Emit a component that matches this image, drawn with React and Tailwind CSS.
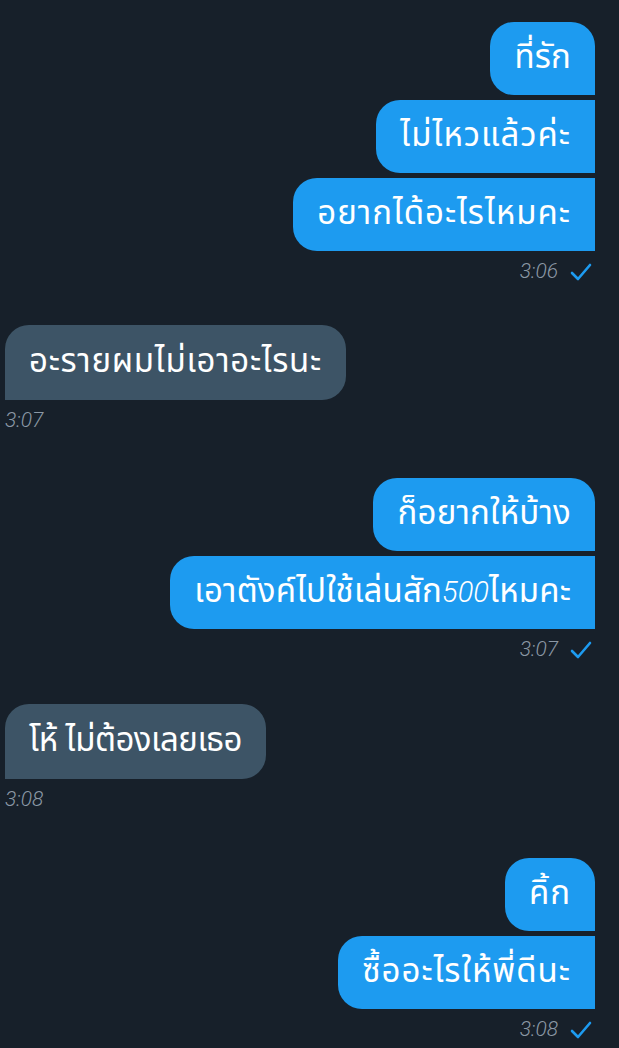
import React from 'react';

const groups = [
  { side: 'right', msgs: ['ที่รัก', 'ไม่ไหวแล้วค่ะ', 'อยากได้อะไรไหมคะ'], time: '3:06', mt: 'mt-0' },
  { side: 'left', msgs: ['อะรายผมไม่เอาอะไรนะ'], time: '3:07', mt: 'mt-[41px]', track: 'tracking-[0.7px]' },
  { side: 'right', msgs: ['ก็อยากให้บ้าง', 'เอาตังค์ไปใช้เล่นสัก|500|ไหมคะ'], time: '3:07', mt: 'mt-[45px]', track: 'tracking-[0.2px]' },
  { side: 'left', msgs: ['โห้ ไม่ต้องเลยเธอ'], time: '3:08', mt: 'mt-[42px]', track: 'tracking-[-0.5px]' },
  { side: 'right', msgs: ['คิ้ก', 'ซื้ออะไรให้พี่ดีนะ'], time: '3:08', mt: 'mt-[46px]', first: 'tracking-[1px]' },
];

function Check() {
  return (
    <svg width="22" height="20" viewBox="0 0 22 20" fill="none">
      <path d="M2 11 L8 17 L20 3" stroke="#1d9bf0" strokeWidth="2.6" strokeLinecap="round" strokeLinejoin="round" />
    </svg>
  );
}

function bubbleShape(side, i) {
  if (side === 'left') return 'rounded-[24px] rounded-bl-none';
  if (i === 0) return 'rounded-[24px] rounded-br-none';
  return 'rounded-l-[24px]';
}

// "|" marks a run of digits that the app renders in its thin latin face
function Text({ value }) {
  const parts = value.split('|');
  return parts.map((p, i) =>
    i % 2 === 1 ? (
      <span key={i} className="font-light italic text-[29px] tracking-normal" style={{ fontFamily: 'Roboto, sans-serif' }}>{p}</span>
    ) : (
      <span key={i}>{p}</span>
    )
  );
}

function Group({ side, msgs, time, mt, track = 'tracking-[1px]', first = 'tracking-[0.2px]' }) {
  const right = side === 'right';
  return (
    <div className={`flex flex-col ${right ? 'items-end' : 'items-start'} ${mt}`}>
      <div className={`flex flex-col gap-[5px] ${right ? 'items-end' : 'items-start'}`}>
        {msgs.map((m, i) => (
          <div
            key={i}
            className={`${right ? 'h-[73px] bg-[#1d9bf0]' : 'h-[75px] bg-[#3d5466]'} flex items-center px-[24px] text-[33px] ${i === 0 && right ? first : track} text-white ${bubbleShape(side, i)}`}
          >
            <Text value={m} />
          </div>
        ))}
      </div>
      <div className="mt-[9px] flex items-center gap-[12px] h-[24px] text-[21px] font-light italic text-[#8b98a5] pr-[3px]" style={{ fontFamily: 'Roboto, sans-serif' }}>
        <span>{time}</span>
        {right && <Check />}
      </div>
    </div>
  );
}

export default function App() {
  return (
    <div className="min-h-[1048px] w-[619px] bg-[#17202a] pt-[22px] pl-[5px] pr-[24px]" style={{ fontFamily: '"Noto Sans Thai", "Noto Sans", "DejaVu Sans", sans-serif' }}>
      {groups.map((g, i) => (
        <Group key={i} {...g} />
      ))}
    </div>
  );
}
